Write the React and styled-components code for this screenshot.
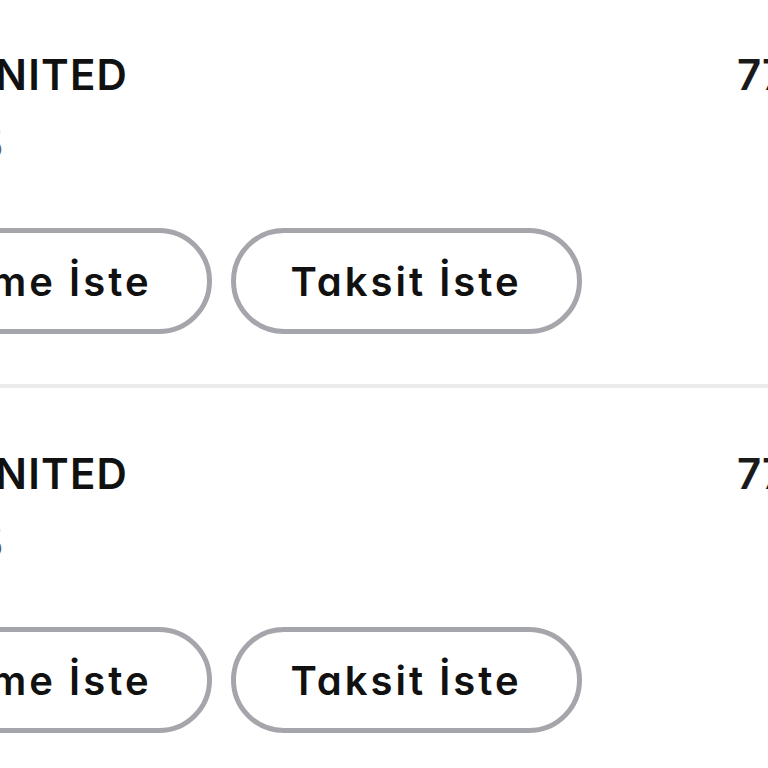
import React from "react";
import styled, { createGlobalStyle } from "styled-components";

const Global = createGlobalStyle`
  html, body {
    margin: 0;
    padding: 0;
    background: #ffffff;
    overflow: hidden;
  }
  body {
    font-family: Inter, "Noto Sans", "Liberation Sans", sans-serif;
    font-feature-settings: "cv11" 1;
    color: #111111;
  }
`;

const Viewport = styled.div`
  width: 768px;
  height: 768px;
  overflow: hidden;
`;

const List = styled.ul`
  list-style: none;
  margin: -11px 0 0 -158px;
  padding: 0;
  width: 1300px;
`;

const Item = styled.li`
  display: flex;
  flex-direction: column;
  padding: 61px 0 50px;
  border-bottom: 4px solid #ebebeb;
`;

const Header = styled.div`
  display: grid;
  grid-template-columns: 121px 774px auto;
  align-items: start;
`;

const Logo = styled.div`
  width: 72px;
  height: 72px;
  border-radius: 50%;
  background: #c8102e;
`;

const Info = styled.div`
  display: flex;
  flex-direction: column;
  gap: 21px;
`;

const Title = styled.div`
  font-size: 42px;
  line-height: 50px;
  font-weight: 600;
  letter-spacing: 1.2px;
  white-space: nowrap;
`;

const Subtitle = styled.div`
  font-size: 40px;
  line-height: 48px;
  font-weight: 400;
  color: #5f5f5f;
  white-space: nowrap;
`;

const Price = styled.div`
  font-size: 42px;
  line-height: 50px;
  font-weight: 600;
  color: #1a1a1a;
  white-space: nowrap;
`;

const Actions = styled.div`
  display: flex;
  gap: 19px;
  margin-top: 59px;
`;

const PillButton = styled.button`
  box-sizing: border-box;
  height: 106px;
  padding: 0 55px;
  border: 5px solid #a5a5ac;
  border-radius: 53px;
  background: #ffffff;
  font-family: inherit;
  font-feature-settings: "cv11" 1;
  font-size: 40px;
  font-weight: 600;
  letter-spacing: 3px;
  color: #111111;
  white-space: nowrap;
  cursor: pointer;
`;

const orders = [
  { id: 1, team: "UNITED", count: "15", price: "77,50 TL" },
  { id: 2, team: "UNITED", count: "15", price: "77,50 TL" },
];

export default function App() {
  return (
    <>
      <Global />
      <Viewport>
        <List>
          {orders.map((o) => (
            <Item key={o.id}>
              <Header>
                <Logo />
                <Info>
                  <Title>{o.team}</Title>
                  <Subtitle>{o.count}</Subtitle>
                </Info>
                <Price>{o.price}</Price>
              </Header>
              <Actions>
                <PillButton>Ödeme İste</PillButton>
                <PillButton>Taksit İste</PillButton>
              </Actions>
            </Item>
          ))}
        </List>
      </Viewport>
    </>
  );
}
